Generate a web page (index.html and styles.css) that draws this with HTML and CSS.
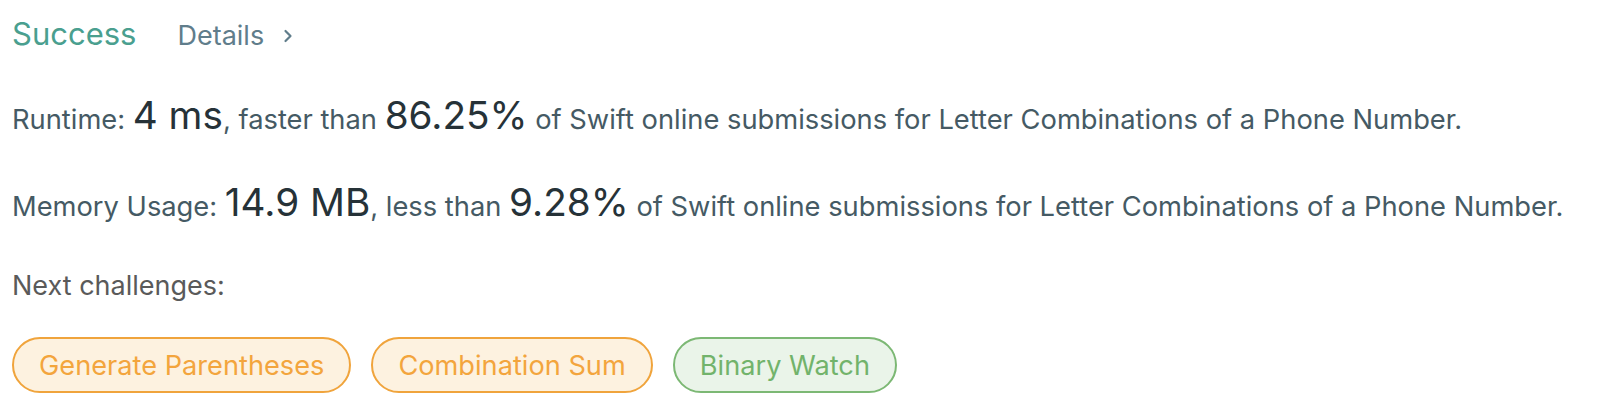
FILE: index.html
```html
<!DOCTYPE html>
<html>
<head>
<meta charset="utf-8">
<link rel="stylesheet" href="styles.css">
</head>
<body>
<div class="result">
  <div class="header">
    <span class="status">Success</span>
    <a class="details">Details
      <svg class="chev" width="10" height="16" viewBox="0 0 10 16"><path d="M2.5 3 L7.5 8 L2.5 13" fill="none" stroke="#607d8b" stroke-width="2.2" stroke-linecap="round" stroke-linejoin="round"/></svg>
    </a>
  </div>
  <p class="stat first">Runtime: <span class="big">4 ms</span>, faster than <span class="big">86.25%</span> of Swift online submissions for Letter Combinations of a Phone Number.</p>
  <p class="stat">Memory Usage: <span class="big">14.9 MB</span>, less than <span class="big">9.28%</span> of Swift online submissions for Letter Combinations of a Phone Number.</p>
  <p class="next">Next challenges:</p>
  <div class="tags">
    <span class="tag medium">Generate Parentheses</span>
    <span class="tag medium">Combination Sum</span>
    <span class="tag easy">Binary Watch</span>
  </div>
</div>
</body>
</html>
```
FILE: styles.css
```css
html, body {
  margin: 0;
  padding: 0;
  background: #ffffff;
}
body {
  font-family: Inter, "Noto Sans", "Liberation Sans", sans-serif;
}
.result {
  padding: 12px 0 0 12px;
}
.header {
  display: flex;
  align-items: baseline;
  gap: 41px;
  height: 44px;
}
.status {
  font-size: 31px;
  color: #4a9f8f;
  line-height: 44px;
}
.details {
  font-size: 27px;
  color: #607d8b;
  display: inline-flex;
  align-items: center;
  gap: 19px;
}
.chev {
  display: block;
}
.stat {
  margin: 0;
  font-size: 27.3px;
  color: #455a64;
  line-height: 82px;
}
.stat.first {
  margin-top: 18px;
}
.big {
  font-size: 38.7px;
  color: #263238;
}
.next {
  margin: 0;
  font-size: 27px;
  color: #5a5a5a;
  line-height: 76px;
}
.tags {
  display: flex;
  gap: 20px;
  margin-top: 13px;
}
.tag {
  display: inline-flex;
  align-items: center;
  height: 56px;
  box-sizing: border-box;
  padding: 0 25px;
  border-radius: 28px;
  font-size: 27.2px;
  border: 2px solid;
}
.medium {
  color: #f3a53d;
  border-color: #f0a43c;
  background: #fdf2e0;
}
.easy {
  color: #72b36b;
  border-color: #7cb874;
  background: #eaf4e9;
}
```
